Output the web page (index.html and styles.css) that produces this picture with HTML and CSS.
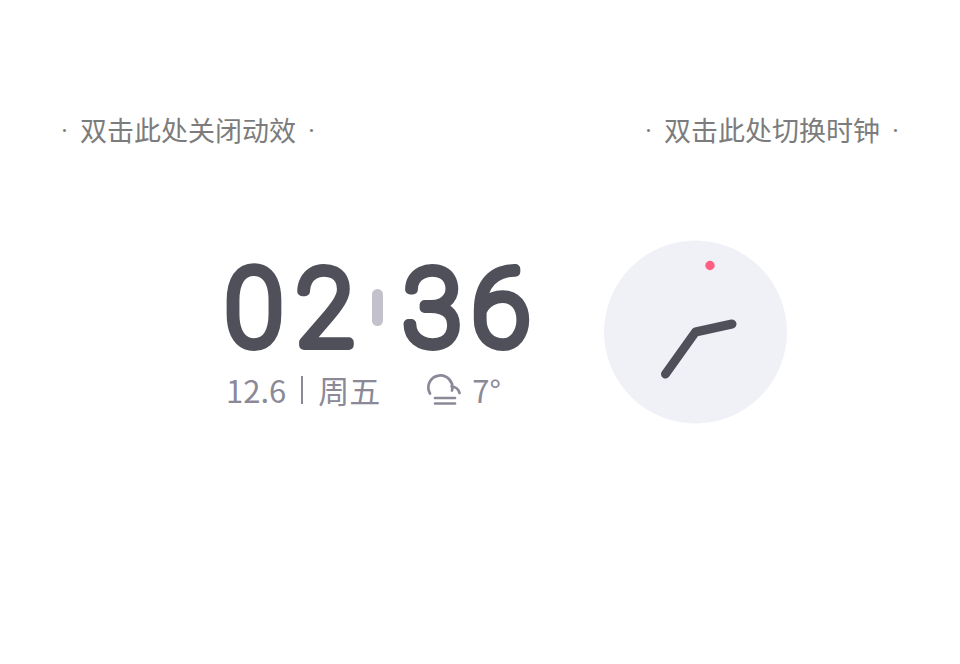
FILE: index.html
```html
<!DOCTYPE html>
<html lang="zh-CN">
<head>
<meta charset="utf-8">
<meta name="viewport" content="width=device-width, initial-scale=1">
<title>时钟</title>
<link rel="stylesheet" href="styles.css">
</head>
<body>
<header class="hints">
  <button class="hint" type="button"><span class="dot">·</span><span>双击此处关闭动效</span><span class="dot">·</span></button>
  <button class="hint" type="button"><span class="dot">·</span><span>双击此处切换时钟</span><span class="dot">·</span></button>
</header>
<main class="clock">
  <section class="digital">
    <svg class="time" viewBox="0 -12 308 128" role="img" aria-label="02:36">
      <g class="digits">
        <text x="30" y="86">0</text>
        <text x="101" y="86">2</text>
        <text x="208" y="86">3</text>
        <text x="277" y="86">6</text>
      </g>
      <rect class="colon" x="148" y="30" width="11" height="37" rx="5.5"/>
    </svg>
    <div class="info">
      <span>12.6</span>
      <span class="divider"></span>
      <span>周五</span>
      <span class="weather">
        <svg class="cloud" viewBox="0 0 36 32" aria-hidden="true">
          <path d="M4 19.500A12 12 0 1 1 26 16.500M25.500 12.500Q32 13 33.500 19M9 24H29M9 29.500H29"/>
        </svg>
        <span>7°</span>
      </span>
    </div>
  </section>
  <svg class="dial" viewBox="0 0 184 184" role="img" aria-label="02:36">
    <circle class="face" cx="91.500" cy="92" r="91.500"/>
    <path class="hands" d="M61.500 134L91.500 92L128 84"/>
    <circle class="second" cx="106" cy="25.500" r="4.700"/>
  </svg>
</main>
</body>
</html>
```
FILE: styles.css
```css
* { box-sizing: border-box; }
body {
  margin: 0;
  background: #fff;
  font-family: "Noto Sans CJK SC", sans-serif;
  font-weight: 400;
}
.hints {
  display: flex;
  justify-content: space-between;
  padding: 112px 61px 0;
}
.hint {
  display: flex;
  gap: 12px;
  padding: 0;
  border: 0;
  background: none;
  color: #7c7c7c;
  font: inherit;
  font-size: 27px;
  line-height: 36px;
}
.dot {
  font-family: Roboto, sans-serif;
  line-height: 38px;
}
.clock {
  display: flex;
  justify-content: center;
  align-items: flex-start;
  gap: 72px;
  padding: 90px 0 0 52px;
}
.digital { padding-top: 7px; }
.time { display: block; width: 308px; }
.digits {
  fill: #50505a;
  stroke: #50505a;
  stroke-width: 10px;
  stroke-linejoin: round;
  font-family: Roboto, sans-serif;
  font-size: 105px;
  font-weight: 100;
  text-anchor: middle;
}
.colon { fill: #c2c1cc; }
.info {
  display: flex;
  align-items: center;
  margin-top: -7px;
  padding-left: 2px;
  color: #8b8998;
  font-size: 31px;
  line-height: 44px;
}
.divider {
  width: 2px;
  height: 28px;
  margin: 0 15px;
  background: currentColor;
}
.weather {
  display: flex;
  align-items: center;
  gap: 10px;
  margin-left: 46px;
}
.cloud {
  width: 36px;
  fill: none;
  stroke: currentColor;
  stroke-width: 2.7px;
  stroke-linecap: round;
}
.dial { width: 184px; }
.face { fill: #f0f1f7; }
.hands {
  fill: none;
  stroke: #50505a;
  stroke-width: 9px;
  stroke-linecap: round;
  stroke-linejoin: round;
}
.second { fill: #ff5f80; }
```
